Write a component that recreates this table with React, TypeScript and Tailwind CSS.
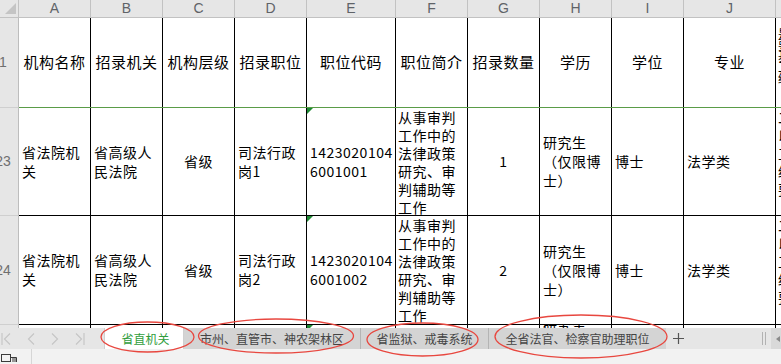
import React from "react";

type Align = "center" | "left" | "top";

type CellData = {
  lines: string[];
  align: Align;
  flag?: boolean;
};

const COLS = [
  { id: "A", w: "w-[72px]" },
  { id: "B", w: "w-[72px]" },
  { id: "C", w: "w-[72px]" },
  { id: "D", w: "w-[72px]" },
  { id: "E", w: "w-[89px]" },
  { id: "F", w: "w-[72px]" },
  { id: "G", w: "w-[72px]" },
  { id: "H", w: "w-[72px]" },
  { id: "I", w: "w-[72px]" },
  { id: "J", w: "w-[92px]" },
  { id: "K", w: "w-[80px]" },
];

const HEADER = ["机构名称", "招录机关", "机构层级", "招录职位", "职位代码", "职位简介", "招录数量", "学历", "学位", "专业"];

const duty = ["从事审判", "工作中的", "法律政策", "研究、审", "判辅助等", "工作"];

function jobRow(n: string, code: string, count: string): CellData[] {
  return [
    { lines: ["省法院机", "关"], align: "left" },
    { lines: ["省高级人", "民法院"], align: "left" },
    { lines: ["省级"], align: "center" },
    { lines: ["司法行政", "岗" + n], align: "left" },
    { lines: ["1423020104", code], align: "left", flag: true },
    { lines: duty, align: "top" },
    { lines: [count], align: "center" },
    { lines: ["研究生", "（仅限博", "士）"], align: "left" },
    { lines: ["博士"], align: "left" },
    { lines: ["法学类"], align: "left" },
    { lines: ["二年", "以上", "工作", "经历", "要求"], align: "top" },
  ];
}

const ROWS = [
  { num: "23", h: "h-[108px]", cells: jobRow("1", "6001001", "1") },
  { num: "24", h: "h-[109px]", cells: jobRow("2", "6001002", "2") },
  { num: "25", h: "h-[40px]", cells: jobRow("3", "6001003", "1") },
];

function RowHead({ label, h }: { label: string; h: string }) {
  return (
    <div className={`${h} w-[19px] shrink-0 overflow-hidden bg-[#e6e6e6] border-r border-b border-r-[#bdbdbd] border-b-[#cfcfcf] flex items-center`}>
      <div className="w-[30px] -ml-[12px] shrink-0 text-center text-[14px] text-[#6f6f6f] font-['Liberation_Sans',sans-serif]">{label}</div>
    </div>
  );
}

function Cell({ data, w }: { data: CellData; w: string }) {
  const pos =
    data.align === "center"
      ? "items-center justify-center text-center"
      : data.align === "left"
      ? "items-center pl-[3px]"
      : "items-start pl-[2px]";
  const lead = data.align === "top" ? "leading-[18px]" : "leading-[19px]";
  return (
    <div className={`${w} shrink-0 relative flex ${pos} border-r border-black overflow-hidden`}>
      {data.flag && (
        <div className="absolute top-0 left-0 w-0 h-0 border-t-[6px] border-t-[#1e8a34] border-r-[6px] border-r-transparent" />
      )}
      <div className={`${lead} whitespace-nowrap`}>
        {data.lines.map((l, i) => (
          <div key={i}>{l}</div>
        ))}
      </div>
    </div>
  );
}

function Chevron({ dir, bar }: { dir: "l" | "r"; bar?: boolean }) {
  return (
    <svg width="12" height="14" viewBox="0 0 12 14" fill="none" stroke="#c6c6c6" strokeWidth="1.2">
      {dir === "l" ? <path d="M9 1.5 L3.5 7 L9 12.5" /> : <path d="M3 1.5 L8.5 7 L3 12.5" />}
      {bar && (dir === "l" ? <path d="M1 1 V13" /> : <path d="M11 1 V13" />)}
    </svg>
  );
}

export default function App() {
  return (
    <div className="relative w-[781px] h-[364px] overflow-hidden bg-white text-black font-['Noto_Sans_CJK_SC',sans-serif]">
      {/* sheet */}
      <div className="h-[328px] overflow-hidden">
        {/* column letters */}
        <div className="flex h-[18px] bg-[#e6e6e6] border-b border-[#c2c2c2]">
          <div className="w-[19px] shrink-0 border-r border-[#c2c2c2] relative">
            <svg width="14" height="14" viewBox="0 0 14 14" className="absolute left-[3px] top-[1px]">
              <path d="M13 2 L13 13 L2 13 Z" fill="#c4c4c4" />
            </svg>
          </div>
          {COLS.map((c) => (
            <div
              key={c.id}
              className={`${c.w} shrink-0 border-r border-[#c2c2c2] flex items-center justify-center text-[14px] text-[#5f6368] font-['Liberation_Sans',sans-serif]`}
            >
              {c.id}
            </div>
          ))}
        </div>

        {/* row 1: titles */}
        <div className="flex h-[90px]">
          <RowHead label="1" h="h-[90px]" />
          <div className="flex border-b border-[#5a9c47]">
            {COLS.map((c, i) =>
              i < HEADER.length ? (
                <div
                  key={c.id}
                  className={`${c.w} shrink-0 border-r border-black flex items-center justify-center text-[15px] tracking-[0.5px]`}
                >
                  {HEADER[i]}
                </div>
              ) : (
                <div key={c.id} className={`${c.w} shrink-0 pl-[2px] pt-[10px] text-[12px] leading-[11px] overflow-hidden`}>
                  <div>是否</div>
                  <div>要求</div>
                  <div>基层</div>
                  <div>工作</div>
                  <div>经历</div>
                </div>
              )
            )}
          </div>
        </div>

        {/* data rows */}
        {ROWS.map((r) => (
          <div key={r.num} className={`flex ${r.h}`}>
            <RowHead label={r.num} h={r.h} />
            <div className="flex border-b border-black text-[14px] tracking-[0.5px]">
              {r.cells.map((d, i) => (
                <Cell key={i} data={d} w={COLS[i].w} />
              ))}
            </div>
          </div>
        ))}
      </div>

      {/* sheet tabs */}
      <div className="flex h-[21px] bg-[#e6e6e6] text-[12px]">
        <div className="w-[104px] shrink-0 flex items-center">
          <div className="flex items-center gap-[12px] pl-[1px]">
            <Chevron dir="l" bar />
            <Chevron dir="l" />
            <Chevron dir="r" />
            <Chevron dir="r" bar />
          </div>
        </div>
        <div className="w-[80px] shrink-0 bg-white flex items-center justify-center pl-[3px] text-[#2f9d3c] border-x border-[#d0d0d0]">
          省直机关
        </div>
        <div className="w-[177px] shrink-0 bg-[#d4d4d4] border-r border-[#b4b4b4] flex items-center justify-center text-[#444]">
          市州、直管市、神农架林区
        </div>
        <div className="w-[128px] shrink-0 bg-[#d4d4d4] border-r border-[#b4b4b4] flex items-center justify-center text-[#444]">
          省监狱、戒毒系统
        </div>
        <div className="w-[177px] shrink-0 bg-[#d4d4d4] flex items-center justify-center text-[#444]">
          全省法官、检察官助理职位
        </div>
        <div className="w-[24px] shrink-0 flex items-center justify-center">
          <svg width="11" height="11" viewBox="0 0 11 11" stroke="#555" strokeWidth="1.2">
            <path d="M5.5 0 V11 M0 5.5 H11" />
          </svg>
        </div>
        <div className="flex-1" />
        <div className="w-[9px] shrink-0 flex items-center gap-[2px]">
          <div className="w-px h-[13px] bg-[#b2b2b2]" />
          <div className="w-px h-[13px] bg-[#b2b2b2]" />
        </div>
        <div className="w-[10px] shrink-0 bg-[#d9d9d9] flex items-center justify-end pr-[1px]">
          <svg width="4" height="6" viewBox="0 0 4 6">
            <path d="M4 0 L0 3 L4 6 Z" fill="#8a8a8a" />
          </svg>
        </div>
      </div>

      {/* status bar */}
      <div className="flex h-[15px] bg-[#f2f2f2] items-center">
        <div className="w-[32px] shrink-0 h-full border-r border-[#d6d6d6] flex items-end pb-[1px] pl-[1px]">
          <svg width="16" height="10" viewBox="0 0 16 10" fill="none" stroke="#3a3a3a" strokeWidth="1">
            <rect x="0.5" y="1.5" width="9" height="7" />
            <path d="M10 4.5 H12 M12 9 V4.5 H15.5 V9 M14 4.5 V9" />
          </svg>
        </div>
      </div>

      {/* red annotation ellipses */}
      <svg className="absolute inset-0 pointer-events-none" width="781" height="364" viewBox="0 0 781 364" fill="none" stroke="#e8473f" strokeWidth="1.3">
        <ellipse cx="147.5" cy="337" rx="46.5" ry="15" />
        <ellipse cx="276" cy="336" rx="77.5" ry="17" />
        <ellipse cx="422.5" cy="339.5" rx="55.5" ry="16.5" />
        <ellipse cx="581" cy="336.5" rx="86" ry="21.5" />
      </svg>
    </div>
  );
}
